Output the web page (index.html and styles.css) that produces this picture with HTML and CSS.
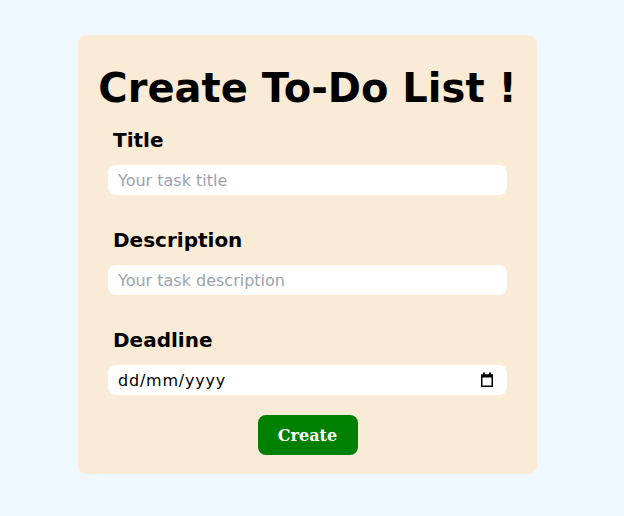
FILE: index.html
```html
<!DOCTYPE html>
<html>
<head>
<meta charset="utf-8">
<link rel="stylesheet" href="styles.css">
</head>
<body>
<form class="card">
  <h1 class="heading">Create To-Do List !</h1>
  <div class="field">
    <label class="label" for="title">Title</label>
    <input class="input" id="title" type="text" placeholder="Your task title">
  </div>
  <div class="field">
    <label class="label" for="desc">Description</label>
    <input class="input" id="desc" type="text" placeholder="Your task description">
  </div>
  <div class="field">
    <label class="label" for="deadline">Deadline</label>
    <div class="date-box">
      <input class="date-input" id="deadline" type="text" placeholder="dd/mm/yyyy">
      <svg class="cal-icon" width="14" height="16" viewBox="0 0 14 16" aria-hidden="true">
        <rect x="3" y="0.5" width="2" height="3" fill="#000"/>
        <rect x="9" y="0.5" width="2" height="3" fill="#000"/>
        <rect x="1" y="2.5" width="12" height="3" fill="#000"/>
        <rect x="1.75" y="3.25" width="10.5" height="11" fill="none" stroke="#000" stroke-width="1.5"/>
      </svg>
    </div>
  </div>
  <div class="actions">
    <button class="btn" type="button">Create</button>
  </div>
</form>
</body>
</html>
```
FILE: styles.css
```css
html, body {
  margin: 0;
  padding: 0;
}
body {
  background: #f0f8ff;
  font-family: "DejaVu Sans", Verdana, sans-serif;
  padding-top: 35px;
  padding-left: 78px;
  height: 516px;
  box-sizing: border-box;
}
.card {
  width: 459px;
  box-sizing: border-box;
  background: #faebd7;
  border-radius: 9px;
  padding: 0 30px 19px;
  display: flex;
  flex-direction: column;
}
.heading {
  margin: 30px -30px 0;
  font-size: 40px;
  line-height: 46px;
  font-weight: bold;
  text-align: center;
  color: #000;
  white-space: nowrap;
}
.field {
  display: flex;
  flex-direction: column;
  margin-top: 17px;
}
.field + .field {
  margin-top: 33px;
}
.label {
  font-size: 20px;
  line-height: 24px;
  font-weight: bold;
  padding-left: 5px;
  margin-bottom: 13px;
  color: #000;
}
.input {
  height: 30px;
  box-sizing: border-box;
  border: none;
  border-radius: 8px;
  background: #fff;
  padding: 0 10px;
  font-family: "DejaVu Sans", Verdana, sans-serif;
  font-size: 16px;
  color: #000;
  outline: none;
}
.input::placeholder {
  color: #9ca3af;
}
.date-box {
  height: 30px;
  box-sizing: border-box;
  border-radius: 8px;
  background: #fff;
  padding: 0 13px 0 10px;
  display: flex;
  align-items: center;
}
.date-input {
  flex: 1;
  min-width: 0;
  border: none;
  background: transparent;
  padding: 0;
  font-family: "DejaVu Sans", Verdana, sans-serif;
  font-size: 16px;
  letter-spacing: 0.8px;
  color: #000;
  outline: none;
}
.date-input::placeholder {
  color: #000;
  opacity: 1;
}
.cal-icon {
  display: block;
  flex: none;
}
.actions {
  display: flex;
  justify-content: center;
  margin-top: 20px;
}
.btn {
  width: 100px;
  height: 40px;
  border: none;
  border-radius: 8px;
  background: #008000;
  color: #fff;
  font-family: "DejaVu Serif", Georgia, serif;
  font-weight: bold;
  font-size: 16px;
}
```
